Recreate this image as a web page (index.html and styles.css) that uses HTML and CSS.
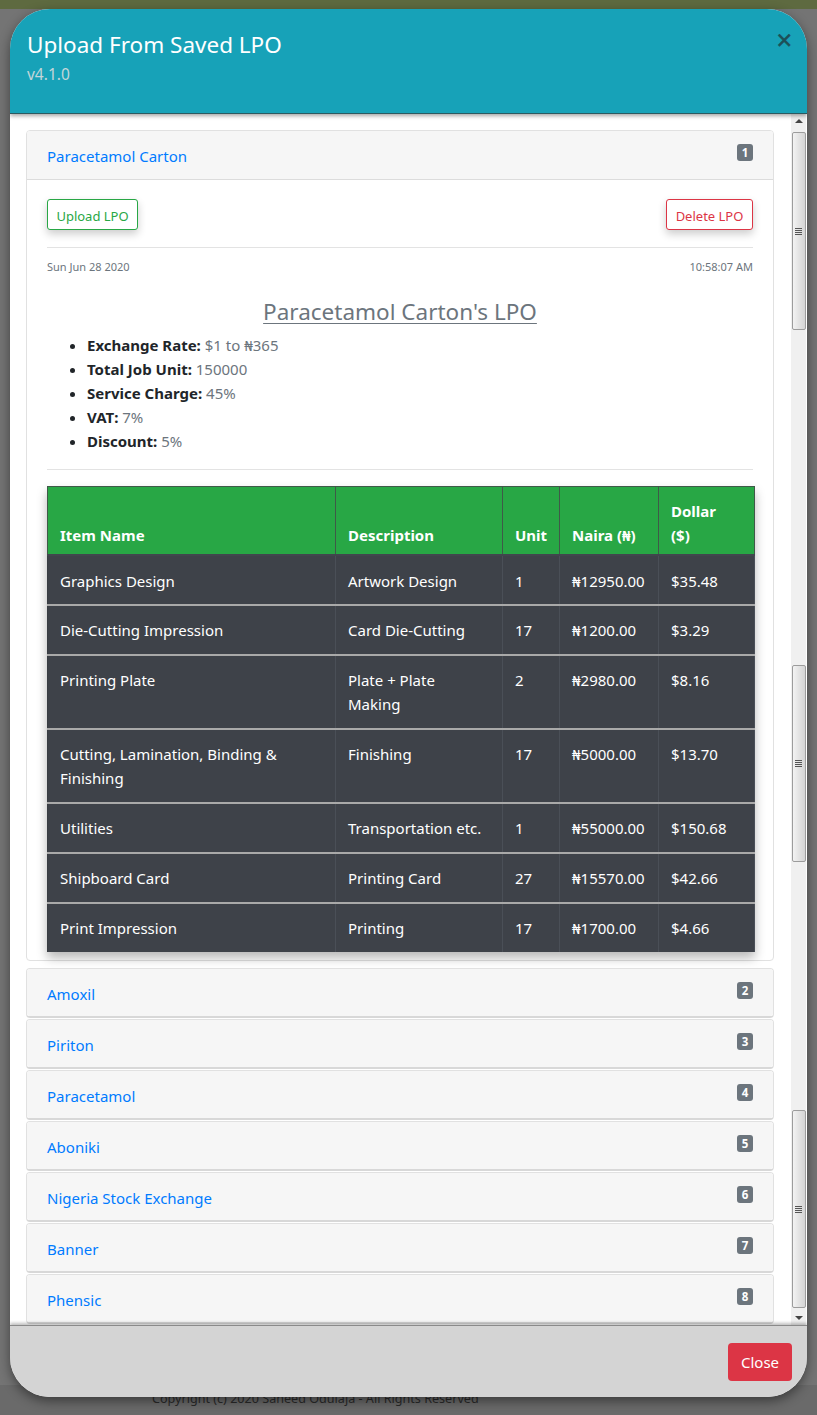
FILE: index.html
```html
<!DOCTYPE html>
<html lang="en">
<head>
<meta charset="utf-8">
<title>Upload From Saved LPO</title>
<link rel="stylesheet" href="styles.css">
</head>
<body>
<div class="page">
  <div class="modal">
    <div class="modal-header">
      <div class="title-block">
        <h4 class="modal-title">Upload From Saved LPO</h4>
        <div class="version">v4.1.0</div>
      </div>
      <span class="close">×</span>
    </div>
    <div class="modal-body">
      <div class="content">
        <div class="card">
          <div class="card-header">
            <span class="card-link">Paracetamol Carton</span>
            <span class="badge">1</span>
          </div>
          <div class="card-body">
            <div class="btn-row">
              <button class="btn btn-success">Upload LPO</button>
              <button class="btn btn-danger">Delete LPO</button>
            </div>
            <hr class="rule">
            <div class="date-row">
              <span>Sun Jun 28 2020</span>
              <span>10:58:07 AM</span>
            </div>
            <h3 class="lpo-title">Paracetamol Carton's LPO</h3>
            <ul class="facts">
              <li><b>Exchange Rate:</b> <span class="muted">$1 to ₦365</span></li>
              <li><b>Total Job Unit:</b> <span class="muted">150000</span></li>
              <li><b>Service Charge:</b> <span class="muted">45%</span></li>
              <li><b>VAT:</b> <span class="muted">7%</span></li>
              <li><b>Discount:</b> <span class="muted">5%</span></li>
            </ul>
            <hr class="rule rule-2">
            <table class="lpo-table">
              <thead>
                <tr>
                  <th class="c-name">Item Name</th>
                  <th class="c-desc">Description</th>
                  <th class="c-unit">Unit</th>
                  <th class="c-naira">Naira (₦)</th>
                  <th class="c-dollar">Dollar ($)</th>
                </tr>
              </thead>
              <tbody>
                <tr><td>Graphics Design</td><td class="d">Artwork Design</td><td class="n">1</td><td class="n">₦12950.00</td><td class="n">$35.48</td></tr>
                <tr><td>Die-Cutting Impression</td><td class="d">Card Die-Cutting</td><td class="n">17</td><td class="n">₦1200.00</td><td class="n">$3.29</td></tr>
                <tr><td>Printing Plate</td><td class="d">Plate + Plate Making</td><td class="n">2</td><td class="n">₦2980.00</td><td class="n">$8.16</td></tr>
                <tr><td>Cutting, Lamination, Binding &amp; Finishing</td><td class="d">Finishing</td><td class="n">17</td><td class="n">₦5000.00</td><td class="n">$13.70</td></tr>
                <tr><td>Utilities</td><td class="d">Transportation etc.</td><td class="n">1</td><td class="n">₦55000.00</td><td class="n">$150.68</td></tr>
                <tr><td>Shipboard Card</td><td class="d">Printing Card</td><td class="n">27</td><td class="n">₦15570.00</td><td class="n">$42.66</td></tr>
                <tr><td>Print Impression</td><td class="d">Printing</td><td class="n">17</td><td class="n">₦1700.00</td><td class="n">$4.66</td></tr>
              </tbody>
            </table>
          </div>
        </div>
        <div class="card"><div class="card-header"><span class="card-link">Amoxil</span><span class="badge">2</span></div></div>
        <div class="card"><div class="card-header"><span class="card-link">Piriton</span><span class="badge">3</span></div></div>
        <div class="card"><div class="card-header"><span class="card-link">Paracetamol</span><span class="badge">4</span></div></div>
        <div class="card"><div class="card-header"><span class="card-link">Aboniki</span><span class="badge">5</span></div></div>
        <div class="card"><div class="card-header"><span class="card-link">Nigeria Stock Exchange</span><span class="badge">6</span></div></div>
        <div class="card"><div class="card-header"><span class="card-link">Banner</span><span class="badge">7</span></div></div>
        <div class="card"><div class="card-header"><span class="card-link">Phensic</span><span class="badge">8</span></div></div>
      </div>
      <div class="scrollbar">
        <div class="arrow arrow-up"></div>
        <div class="thumb thumb-1"><span class="grip"></span></div>
        <div class="thumb thumb-2"><span class="grip"></span></div>
        <div class="thumb thumb-3"><span class="grip"></span></div>
        <div class="arrow arrow-down"></div>
      </div>
    </div>
    <div class="modal-footer">
      <button class="btn-close">Close</button>
    </div>
  </div>
  <div class="copyright">Copyright (c) 2020 Saheed Odulaja - All Rights Reserved</div>
</div>
</body>
</html>
```
FILE: styles.css
```css
* { box-sizing: border-box; }
html, body { margin: 0; padding: 0; }
body {
  width: 817px;
  height: 1415px;
  overflow: hidden;
  font-family: "Noto Sans", "Open Sans", "DejaVu Sans", sans-serif;
  color: #212529;
  background: linear-gradient(to bottom, #5e6a40 0, #5e6a40 9px, #747474 9px, #747474 1385px, #6a6a6a 1385px);
}
.page {
  padding: 9px 10px 0 10px;
}
.modal {
  position: relative;
  z-index: 2;
  width: 797px;
  height: 1388px;
  border-radius: 40px;
  overflow: hidden;
  background: #fff;
  display: flex;
  flex-direction: column;
  box-shadow: 0 4px 12px rgba(0,0,0,.45);
}
.modal-header {
  height: 105px;
  flex: none;
  background: #17a2b8;
  display: flex;
  justify-content: space-between;
  align-items: flex-start;
  padding: 20px 17px 0 17px;
  position: relative;
  z-index: 2;
  border-bottom: 1px solid #2b5960;
  box-shadow: 0 2px 4px rgba(0,0,0,.35);
}
.modal-title {
  margin: 0;
  font-weight: 400;
  font-size: 22.5px;
  line-height: 32px;
  color: #fff;
}
.version {
  font-size: 15.5px;
  line-height: 22px;
  color: #c3d6da;
  margin-top: 2px;
}
.close {
  font-size: 21px;
  font-weight: 400;
  line-height: 22px;
  color: #1d4f57;
  margin-top: 0;
  margin-right: -3px;
  font-family: "DejaVu Sans", sans-serif;
  -webkit-text-stroke: 0.6px #1d4f57;
}
.modal-body {
  flex: 1;
  display: flex;
  min-height: 0;
  overflow: hidden;
}
.content {
  flex: 1;
  padding: 16px 17px 0 16px;
  overflow: hidden;
}
.card {
  border: 1px solid #e1e1e1;
  border-bottom: 2px solid #d8d8d8;
  border-radius: 4px;
  margin-bottom: 1px;
  background: #fff;
}
.card-header {
  height: 47px;
  background: #f6f6f6;
  display: flex;
  justify-content: space-between;
  align-items: center;
  padding: 0 20px;
  border-radius: 3px;
}
.card:first-child {
  border-bottom: 1px solid #e1e1e1;
  margin-bottom: 7px;
}
.card:first-child .card-header {
  height: 49px;
  border-bottom: 1px solid #dcdcdc;
  border-radius: 3px 3px 0 0;
}
.card-link {
  color: #007bff;
  font-size: 15px;
  line-height: 24px;
  margin-top: 2px;
}
.badge {
  background: #6c757d;
  color: #fff;
  font-size: 11.5px;
  font-weight: 700;
  line-height: 17px;
  width: 16px;
  height: 17px;
  text-align: center;
  border-radius: 3px;
  margin-top: -5px;
}
.card-body {
  padding: 19px 20px 8px 20px;
}
.btn-row {
  display: flex;
  justify-content: space-between;
}
.btn {
  font-family: inherit;
  font-size: 13px;
  line-height: 20px;
  height: 31px;
  padding: 2px 8px 0 8px;
  background: #fff;
  border-radius: 3px;
  box-shadow: 0 4px 8px rgba(0,0,0,.2);
}
.btn-success { border: 1px solid #28a745; color: #28a745; width: 91px; }
.btn-danger { border: 1px solid #dc3545; color: #dc3545; width: 87px; }
.rule {
  border: 0;
  border-top: 1px solid #e3e3e3;
  margin: 17px 0 0 0;
}
.date-row {
  display: flex;
  justify-content: space-between;
  font-size: 11px;
  line-height: 18px;
  color: #6c757d;
  margin-top: 10px;
}
.lpo-title {
  margin: 22px 0 0 0;
  text-align: center;
  font-weight: 400;
  font-size: 22.5px;
  line-height: 28px;
  color: #6c757d;
  text-decoration: underline;
  text-decoration-thickness: 1px;
  text-underline-offset: 3px;
}
.facts {
  margin: 7px 0 0 0;
  padding-left: 40px;
  font-size: 15px;
  line-height: 24px;
}
.facts b { color: #212529; }
.muted { color: #6c757d; }
.rule-2 { margin-top: 16px; }
.lpo-table {
  margin-top: 16px;
  width: 707px;
  border-collapse: collapse;
  table-layout: fixed;
  font-size: 15px;
  line-height: 24px;
  color: #fff;
  box-shadow: 0 6px 10px rgba(0,0,0,.28);
}
.lpo-table th {
  background: #28a745;
  text-align: left;
  vertical-align: bottom;
  font-weight: 700;
  padding: 12px 12px 7px 12px;
  border: 1px solid #3f5948;
  border-bottom: 2px solid #41464d;
}
.lpo-table th.c-naira { white-space: nowrap; }
.lpo-table th.c-dollar { padding-right: 20px; }
.lpo-table td {
  background: #3e4249;
  vertical-align: top;
  padding: 12px 12px 12px 12px;
  border-left: 1px solid #4a4f57;
  border-right: 1px solid #4a4f57;
  border-top: 2px solid #a9a9a9;
}
.lpo-table td.d { padding-right: 18px; }
.lpo-table td.n { white-space: nowrap; }
.lpo-table tbody tr:first-child td { border-top: 0; padding-top: 13px; padding-bottom: 11px; }
.lpo-table td:first-child { border-left: 1px solid #3a3e44; }
.c-name { width: 288px; }
.c-desc { width: 167px; }
.c-unit { width: 57px; }
.c-naira { width: 99px; }
.c-dollar { width: 96px; }
.scrollbar {
  width: 15px;
  flex: none;
  margin-right: 1px;
  background: #f0f0f0;
  display: flex;
  flex-direction: column;
  align-items: center;
}
.arrow {
  width: 0; height: 0;
  border-left: 4px solid transparent;
  border-right: 4px solid transparent;
}
.arrow-up { border-bottom: 4px solid #444; margin-top: 5px; }
.arrow-down { border-top: 4px solid #444; margin-top: 8px; }
.thumb {
  width: 14px;
  border: 1px solid #9c9c9c;
  border-radius: 2px;
  background: linear-gradient(to right, #f3f3f3, #e6e6e6 40%, #d4d4d4);
  display: flex;
  align-items: center;
  justify-content: center;
}
.thumb-1 { height: 198px; margin-top: 9px; }
.thumb-2 { height: 197px; margin-top: 335px; }
.thumb-3 { height: 198px; margin-top: 248px; }
.grip {
  width: 7px;
  height: 7px;
  background: repeating-linear-gradient(to bottom, #555 0, #555 1px, transparent 1px, transparent 2px);
}
.modal-footer {
  height: 72px;
  flex: none;
  background: #d4d4d4;
  border-top: 1px solid #8a8a8a;
  box-shadow: 0 -2px 3px rgba(0,0,0,.25);
  position: relative;
  z-index: 2;
  display: flex;
  justify-content: flex-end;
  align-items: flex-start;
  padding: 17px 15px 0 0;
}
.btn-close {
  font-family: inherit;
  background: #dc3545;
  color: #fff;
  border: 0;
  border-radius: 4px;
  width: 64px;
  height: 38px;
  font-size: 15px;
}
.copyright {
  position: relative;
  z-index: 1;
  margin-top: -7px;
  padding-left: 142px;
  font-size: 12.6px;
  color: #2a2a2a;
}
```
